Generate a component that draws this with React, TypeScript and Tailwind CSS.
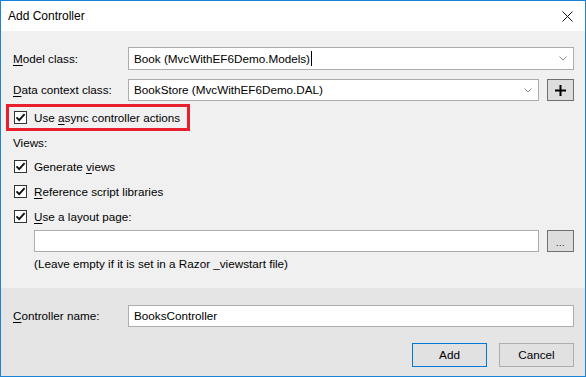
import type { ReactNode } from 'react'

function Chevron() {
  return (
    <svg width="8" height="5" viewBox="0 0 8 5" className="shrink-0">
      <path d="M0.5 0.5 L4 4 L7.5 0.5" fill="none" stroke="#8a8a8a" strokeWidth="1" />
    </svg>
  )
}

function Check({ label }: { label: ReactNode }) {
  return (
    <div className="flex items-center h-[21px]">
      <div className="ml-[1px] w-[13px] h-[13px] border border-[#333333] bg-white flex items-center justify-center">
        <svg width="11" height="11" viewBox="0 0 11 11">
          <path d="M1.5 5.3 L4.2 8.2 L9.6 2.2" fill="none" stroke="#111" strokeWidth="1.9" />
        </svg>
      </div>
      <span className="ml-[7px] text-black">{label}</span>
    </div>
  )
}

function U({ children }: { children: ReactNode }) {
  return <span className="underline underline-offset-[2px]">{children}</span>
}

function SmallButton({ children }: { children: ReactNode }) {
  return (
    <button className="ml-[8px] w-[27px] h-[22px] border border-[#707070] bg-[#dddddd] flex items-center justify-center shrink-0">
      {children}
    </button>
  )
}

export default function App() {
  return (
    <div className="w-[586px] h-[377px] border border-[#1883d7] bg-[#f0f0f0] flex flex-col font-['Liberation_Sans',Arial,sans-serif] text-[11.7px] text-black">
      {/* title bar */}
      <div className="h-[30px] bg-white flex items-center justify-between pl-[7px] pr-[12px] shrink-0">
        <span className="text-[12px]">Add Controller</span>
        <svg width="11" height="11" viewBox="0 0 11 11">
          <path d="M0.5 0.5 L10.5 10.5 M10.5 0.5 L0.5 10.5" stroke="#111" strokeWidth="1" />
        </svg>
      </div>

      {/* main */}
      <div className="flex-1 flex flex-col pl-[12px] pr-[11px] pt-[16px]">
        <div className="flex items-center h-[23px]">
          <span className="w-[115px] shrink-0"><U>M</U>odel class:</span>
          <div className="flex-1 h-[23px] bg-white border border-[#acacac] flex items-center pl-[5px] pr-[6px]">
            <span className="flex-1 flex items-center">
              Book (MvcWithEF6Demo.Models)<span className="ml-[1px] w-[1px] h-[15px] bg-black" />
            </span>
            <Chevron />
          </div>
        </div>

        <div className="flex items-center h-[22px] mt-[9px]">
          <span className="w-[115px] shrink-0"><U>D</U>ata context class:</span>
          <div className="flex-1 h-[22px] bg-white border border-[#acacac] flex items-center pl-[5px] pr-[6px]">
            <span className="flex-1">BookStore (MvcWithEF6Demo.DAL)</span>
            <Chevron />
          </div>
          <SmallButton>
            <svg width="11" height="11" viewBox="0 0 11 11">
              <path d="M5.5 0 V11 M0 5.5 H11" stroke="#000" strokeWidth="2" />
            </svg>
          </SmallButton>
        </div>

        <div className="self-start ml-[-7px] mt-[3px] border-[3px] border-[#e8202b] pl-[4px] pr-[7px] h-[27px] flex items-center">
          <Check label={<>Use <U>a</U>sync controller actions</>} />
        </div>

        <div className="mt-[5px] h-[14px] flex items-center">Views:</div>

        <div className="mt-[6px] flex flex-col gap-[4px]">
          <Check label={<>Generate <U>v</U>iews</>} />
          <Check label={<><U>R</U>eference script libraries</>} />
          <Check label={<><U>U</U>se a layout page:</>} />
        </div>

        <div className="ml-[21px] mt-[3px] flex items-center h-[22px]">
          <div className="flex-1 h-[22px] bg-white border border-[#acacac]" />
          <SmallButton>
            <span className="text-[9px] leading-none mt-[4px] tracking-[0.5px]">...</span>
          </SmallButton>
        </div>

        <div className="ml-[21px] mt-[4px] h-[15px] flex items-center">
          (Leave empty if it is set in a Razor _viewstart file)
        </div>
      </div>

      {/* bottom */}
      <div className="h-[88px] bg-[#e5e5e5] shrink-0 flex flex-col pl-[12px] pr-[11px] pt-[17px]">
        <div className="flex items-center h-[22px]">
          <span className="w-[115px] shrink-0"><U>C</U>ontroller name:</span>
          <div className="flex-1 h-[22px] bg-white border border-[#acacac] flex items-center pl-[5px]">
            BooksController
          </div>
        </div>
        <div className="mt-[16px] flex justify-end gap-[12px]">
          <button className="w-[75px] h-[24px] border border-[#0078d7] bg-[#e1e1e1]">Add</button>
          <button className="w-[75px] h-[24px] border border-[#adadad] bg-[#e1e1e1]">Cancel</button>
        </div>
      </div>
    </div>
  )
}
